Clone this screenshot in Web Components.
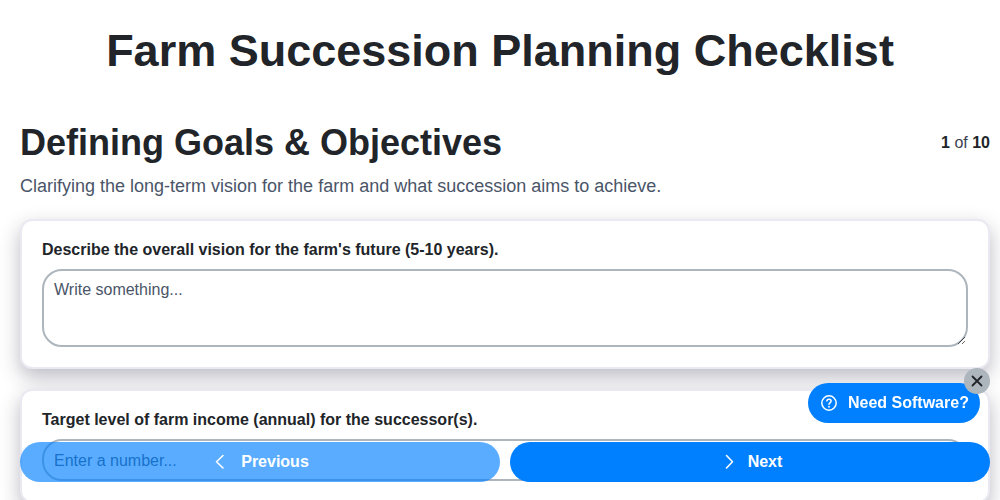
<!DOCTYPE html>
<html lang="en">
<head>
<meta charset="UTF-8">
<title>Farm Succession Planning Checklist</title>
<style>
    html,body{margin:0;height:100%;overflow:hidden;background:#fff}
    body{font-family:"Liberation Sans",Arial,sans-serif;color:#212529}
</style>
</head>
<body>
<checklist-page>
    <step-header slot="header" heading="Defining Goals &amp; Objectives" current="1" total="10">
        Clarifying the long-term vision for the farm and what succession aims to achieve.
    </step-header>
    <question-card label="Describe the overall vision for the farm's future (5-10 years)." kind="textarea" hint="Write something..."></question-card>
    <question-card label="Target level of farm income (annual) for the successor(s)." kind="number" hint="Enter a number..."></question-card>
</checklist-page>
<nav-bar></nav-bar>
<software-pill></software-pill>
<script>
    class ChecklistPage extends HTMLElement{
        constructor(){
            super();
            this.attachShadow({mode:'open'}).innerHTML = `
                <style>
                    :host{display:block;padding:0 10px 0 20px}
                    h1{margin:0 10px 0 0;padding-top:26px;height:96px;box-sizing:border-box;text-align:center;
                       font-size:45px;line-height:50px;font-weight:700}
                    .cards{display:flex;flex-direction:column;gap:20px}
                </style>
                <h1>Farm Succession Planning Checklist</h1>
                <slot name="header"></slot>
                <div class="cards"><slot></slot></div>
            `;
        }
    }
    class StepHeader extends HTMLElement{
        constructor(){
            super();
            const root = this.attachShadow({mode:'open'});
            root.innerHTML = `
                <style>
                    :host{display:block;height:123px;padding-top:25px;box-sizing:border-box}
                    .top{display:flex;justify-content:space-between;align-items:flex-start}
                    h2{margin:0;font-size:36px;line-height:44px;font-weight:700}
                    .count{font-size:16px;line-height:18px;padding-top:13px;color:#3a4250}
                    .count b{color:#212529}
                    p{margin:10px 0 0;font-size:18px;line-height:22px;color:#4a5568}
                </style>
                <div class="top">
                    <h2></h2>
                    <span class="count"><b></b> of <b></b></span>
                </div>
                <p><slot></slot></p>
            `;
            root.querySelector('h2').textContent = this.getAttribute('heading');
            const nums = root.querySelectorAll('b');
            nums[0].textContent = this.getAttribute('current');
            nums[1].textContent = this.getAttribute('total');
        }
    }
    class QuestionCard extends HTMLElement{
        constructor(){
            super();
            const root = this.attachShadow({mode:'open'});
            root.innerHTML = `
                <style>
                    :host{display:block;box-sizing:border-box;background:#fff;border:2px solid #e9e9f2;border-radius:12px;
                          padding:20px;box-shadow:0 8px 20px rgba(30,30,60,.3)}
                    label{display:block;font-size:16px;line-height:18px;font-weight:700;color:#212529;margin-bottom:10px}
                    textarea,input{display:block;width:100%;box-sizing:border-box;margin:0;border:2px solid #adb5bd;
                          border-radius:20px;background:#fff;padding:10px;font:16px/18px "Liberation Sans",Arial,sans-serif;color:#212529;outline:none}
                    textarea{height:78px;resize:vertical}
                    input{height:42px;padding-top:12px}
                    ::placeholder{color:#4a5568;opacity:1}
                </style>
                <label></label>
            `;
            root.querySelector('label').textContent = this.getAttribute('label');
            const field = document.createElement(this.getAttribute('kind') == 'textarea' ? 'textarea' : 'input');
            if(field.tagName == 'INPUT') field.type = 'number';
            field.placeholder = this.getAttribute('hint');
            root.appendChild(field);
        }
    }
    class NavButton extends HTMLElement{
        constructor(){
            super();
            const root = this.attachShadow({mode:'open'});
            const path = this.getAttribute('dir') == 'prev' ? 'M12 3.5 5.5 9.75 12 16' : 'M8.5 3.5 14.5 9.75 8.5 16';
            root.innerHTML = `
                <style>
                    :host{display:flex;flex:1;height:40px;align-items:center;justify-content:center;gap:10px;
                          background:#0080ff;color:#fff;border-radius:20px;font-size:16px;font-weight:700;cursor:pointer}
                    :host([dir=prev]){opacity:.65}
                    svg{width:20px;height:20px;flex:none;fill:none;stroke:#fff;stroke-width:1.6;stroke-linecap:round;stroke-linejoin:round}
                </style>
                <svg viewBox="0 0 20 20"><path d="${path}"/></svg>
                <slot></slot>
            `;
        }
    }
    class NavBar extends HTMLElement{
        constructor(){
            super();
            this.attachShadow({mode:'open'}).innerHTML = `
                <style>
                    :host{position:fixed;left:20px;right:10px;bottom:18px;display:flex;gap:10px}
                </style>
                <nav-button dir="prev">Previous</nav-button>
                <nav-button dir="next">Next</nav-button>
            `;
        }
    }
    class SoftwarePill extends HTMLElement{
        constructor(){
            super();
            this.attachShadow({mode:'open'}).innerHTML = `
                <style>
                    :host{position:fixed;left:808px;top:383px;width:172px;height:40px;box-sizing:border-box;display:flex;align-items:center;
                          gap:10px;padding-left:12px;background:#0080ff;color:#fff;border-radius:20px;font-size:16px;font-weight:700}
                    svg.q{width:18px;height:18px;flex:none;fill:none;stroke:#fff;stroke-width:1.5;stroke-linecap:round}
                    .close{position:absolute;left:156px;top:-15px;width:26px;height:26px;border-radius:50%;background:#adb5bd;
                          display:flex;align-items:center;justify-content:center}
                    .close svg{width:12px;height:12px;fill:none;stroke:#212529;stroke-width:1.8;stroke-linecap:round}
                </style>
                <svg class="q" viewBox="0 0 18 18">
                    <circle cx="9" cy="9" r="7.2"/>
                    <path d="M6.9 7.1C6.9 5.9 7.9 5.2 9 5.2c1.2 0 2.1.8 2.1 1.9 0 1.7-2.1 1.7-2.1 3.2"/>
                    <path d="M9 12.7v.1" stroke-width="1.8"/>
                </svg>
                <span>Need Software?</span>
                <div class="close"><svg viewBox="0 0 12 12"><path d="M1.5 1.5l9 9M10.5 1.5l-9 9"/></svg></div>
            `;
        }
    }
    customElements.define('checklist-page',ChecklistPage);
    customElements.define('step-header',StepHeader);
    customElements.define('question-card',QuestionCard);
    customElements.define('nav-button',NavButton);
    customElements.define('nav-bar',NavBar);
    customElements.define('software-pill',SoftwarePill);
</script>
</body>
</html>
